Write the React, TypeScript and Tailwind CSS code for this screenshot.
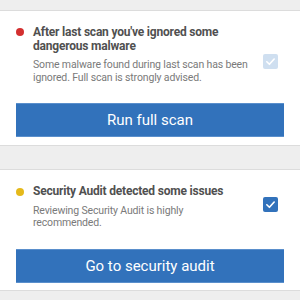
import React from "react";

function Check({ color }: { color: string }) {
  return (
    <div className={`w-[15px] h-[15px] rounded-[2px] flex items-center justify-center ${color}`}>
      <svg width="11" height="11" viewBox="0 0 12 12" fill="none">
        <path d="M2 6.3 L4.8 9 L10 3.3" stroke="white" strokeWidth="1.8" strokeLinecap="round" strokeLinejoin="round" />
      </svg>
    </div>
  );
}

export default function App() {
  return (
    <div
      className="w-[300px] h-[300px] bg-[#eeeeee] pt-[10px] overflow-hidden"
      style={{ fontFamily: "Roboto, 'Noto Sans', sans-serif" }}
    >
      <div className="bg-white border-y border-[#dcdcdc] pt-[14px] pb-[8px]">
        <div className="flex items-start pl-[16px] pr-[22px]">
          <div className="w-[8px] h-[8px] rounded-full mt-[3px] shrink-0 bg-[#d32f2f]" />
          <div className="ml-[9px] w-[215px]">
            <div className="text-[12px] leading-[14px] tracking-[-0.2px] font-bold text-[#505050]">
              After last scan you've ignored some dangerous malware
            </div>
            <div className="text-[10.5px] leading-[13px] tracking-[-0.15px] text-[#7a7a7a] mt-[4.5px]">
              Some malware found during last scan has been ignored. Full scan is strongly advised.
            </div>
          </div>
          <div className="ml-auto mt-[29px]">
            <Check color="bg-[#cfdff0]" />
          </div>
        </div>
        <div className="mx-[16px] mt-[19.5px] h-[34px] bg-[#3272bb] border-y border-[#5a8fcc] flex items-center justify-center text-white text-[15px]">
          Run full scan
        </div>
      </div>
      <div className="h-[23px]" />
      <div className="bg-white border-y border-[#dcdcdc] pt-[14px] pb-[7px]">
        <div className="flex items-start pl-[16px] pr-[22px]">
          <div className="w-[8px] h-[8px] rounded-full mt-[3.5px] shrink-0 bg-[#e5b91a]" />
          <div className="ml-[9px] w-[215px]">
            <div className="text-[12px] leading-[14px] tracking-[-0.2px] font-bold text-[#505050]">
              Security Audit detected some issues
            </div>
            <div className="text-[10.5px] leading-[11.5px] tracking-[-0.15px] text-[#7a7a7a] mt-[7px]">
              Reviewing Security Audit is highly recommended.
            </div>
          </div>
          <div className="ml-auto mt-[13px]">
            <Check color="bg-[#3272bb]" />
          </div>
        </div>
        <div className="mx-[16px] mt-[21px] h-[34px] bg-[#3272bb] border-y border-[#5a8fcc] flex items-center justify-center text-white text-[15px]">
          Go to security audit
        </div>
      </div>
    </div>
  );
}
